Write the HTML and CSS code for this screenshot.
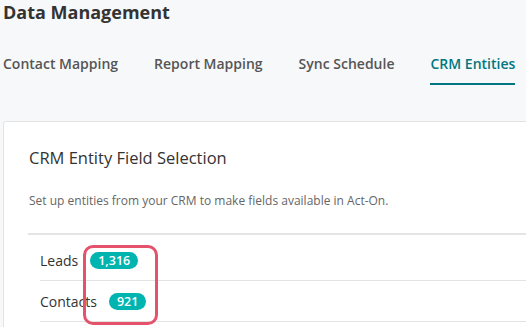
FILE: index.html
```html
<!DOCTYPE html>
<html>
<head>
<meta charset="utf-8">
<link rel="stylesheet" href="styles.css">
</head>
<body>
<div class="page">
  <h1 class="title">Data Management</h1>
  <nav class="tabs">
    <span class="tab">Contact Mapping</span>
    <span class="tab">Report Mapping</span>
    <span class="tab">Sync Schedule</span>
    <span class="tab active">CRM Entities</span>
  </nav>
  <section class="card">
    <h2 class="card-title">CRM Entity Field Selection</h2>
    <p class="card-desc">Set up entities from your CRM to make fields available in Act-On.</p>
    <div class="table">
      <div class="row"><span class="name">Leads</span><span class="badge">1,316</span></div>
      <div class="row"><span class="name">Contacts</span><span class="badge">921</span></div>
    </div>
  </section>
</div>
<div class="highlight"></div>
</body>
</html>
```
FILE: styles.css
```css
html, body {
  margin: 0;
  padding: 0;
  background: #f7f8fa;
  overflow: hidden;
  height: 327px;
}
body {
  font-family: "Open Sans", "Noto Sans", sans-serif;
  color: #333;
  position: relative;
}
.page {
  padding-left: 3px;
  height: 327px;
  overflow: hidden;
}
.title {
  margin: 0;
  font-size: 18px;
  font-weight: 700;
  line-height: 24px;
  color: #333;
}
.tabs {
  display: flex;
  gap: 36px;
  margin-top: 30px;
  white-space: nowrap;
}
.tab {
  font-size: 14px;
  font-weight: 600;
  line-height: 20px;
  color: #555;
  padding-bottom: 9px;
  border-bottom: 2px solid transparent;
}
.tab.active {
  color: #00777f;
  border-bottom-color: #00777f;
}
.card {
  margin-top: 36px;
  width: 600px;
  background: #fff;
  border: 1px solid #e3e3e3;
  border-radius: 3px;
  padding: 25px 0 0 25px;
  box-sizing: border-box;
  height: 260px;
}
.card-title {
  margin: 0;
  font-size: 16.5px;
  font-weight: 400;
  line-height: 22px;
  color: #333;
}
.card-desc {
  margin: 24px 0 0;
  font-size: 12px;
  line-height: 16px;
  color: #666;
}
.table {
  margin-top: 24px;
  margin-left: -1px;
  border-top: 2px solid #e4e4e4;
  padding-top: 5px;
}
.row {
  margin-left: 12px;
  display: flex;
  align-items: center;
  gap: 12px;
  border-bottom: 1px solid #e3e3e3;
  box-sizing: border-box;
  height: 41px;
}
.name {
  font-size: 14px;
  color: #333;
}
.badge {
  background: #00b5b0;
  color: #fff;
  font-size: 12.5px;
  font-weight: 600;
  line-height: 17px;
  height: 17px;
  padding: 0 8px;
  border-radius: 9px;
}
.highlight {
  position: absolute;
  left: 83px;
  top: 245px;
  width: 75px;
  height: 80px;
  box-sizing: border-box;
  border: 3px solid #e5526b;
  border-radius: 10px;
}
```
